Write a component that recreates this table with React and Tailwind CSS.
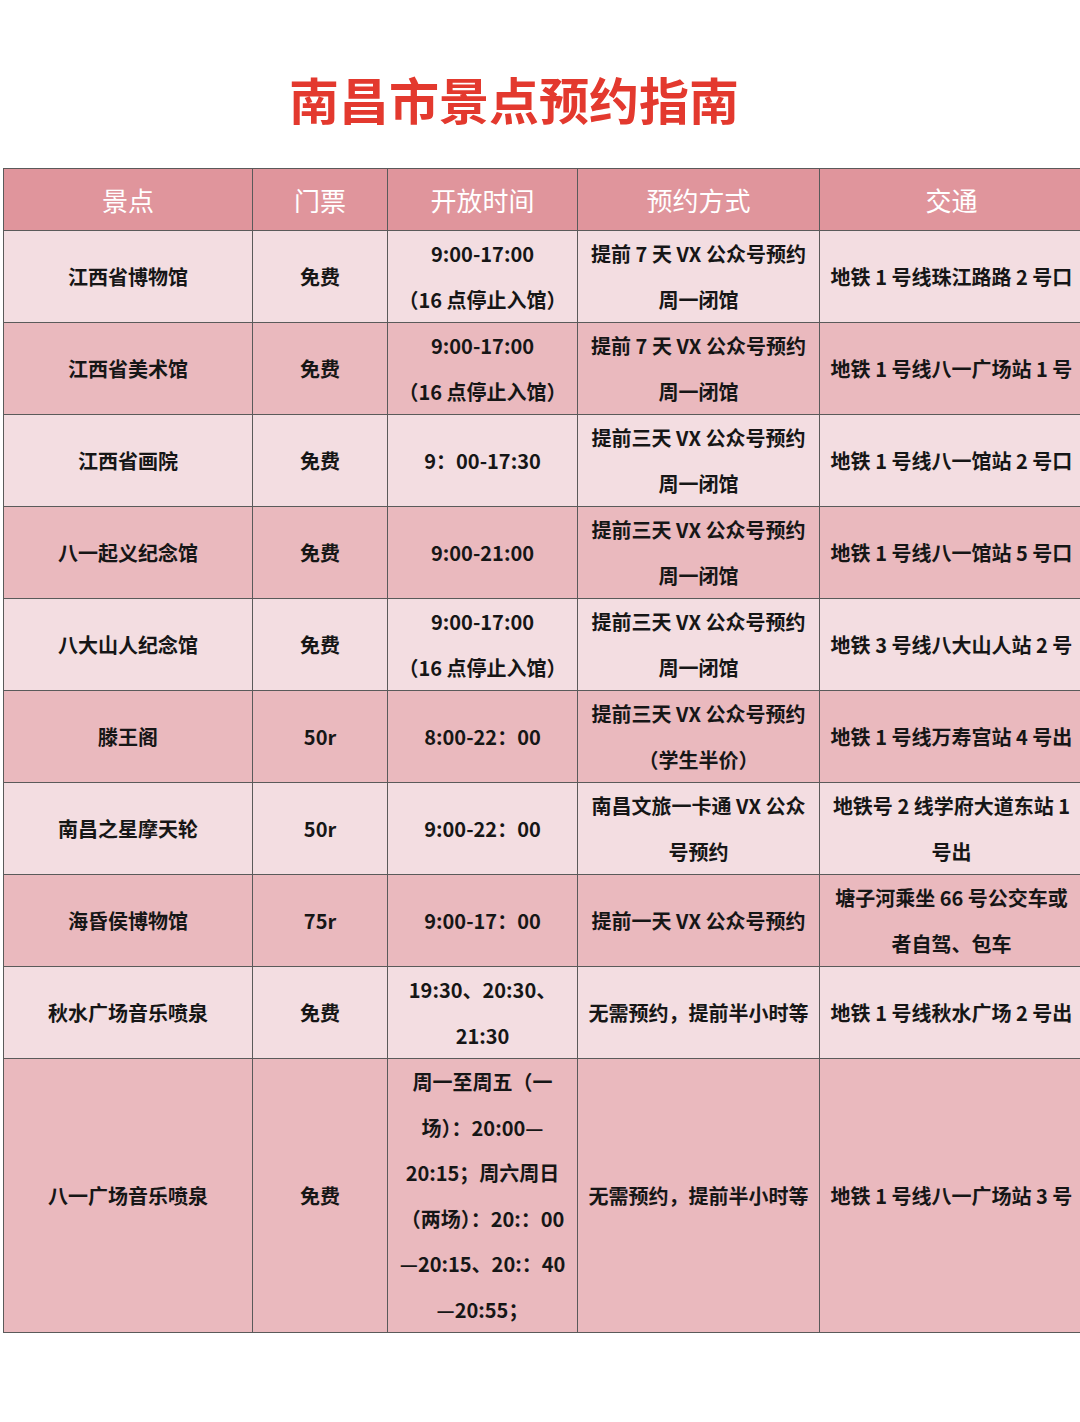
const rows = [
  {
    name: "江西省博物馆",
    ticket: "免费",
    time: ["9:00-17:00", "（16 点停止入馆）"],
    book: ["提前 7 天 VX 公众号预约", "周一闭馆"],
    transit: ["地铁 1 号线珠江路路 2 号口"],
  },
  {
    name: "江西省美术馆",
    ticket: "免费",
    time: ["9:00-17:00", "（16 点停止入馆）"],
    book: ["提前 7 天 VX 公众号预约", "周一闭馆"],
    transit: ["地铁 1 号线八一广场站 1 号"],
  },
  {
    name: "江西省画院",
    ticket: "免费",
    time: ["9：00-17:30"],
    book: ["提前三天 VX 公众号预约", "周一闭馆"],
    transit: ["地铁 1 号线八一馆站 2 号口"],
  },
  {
    name: "八一起义纪念馆",
    ticket: "免费",
    time: ["9:00-21:00"],
    book: ["提前三天 VX 公众号预约", "周一闭馆"],
    transit: ["地铁 1 号线八一馆站 5 号口"],
  },
  {
    name: "八大山人纪念馆",
    ticket: "免费",
    time: ["9:00-17:00", "（16 点停止入馆）"],
    book: ["提前三天 VX 公众号预约", "周一闭馆"],
    transit: ["地铁 3 号线八大山人站 2 号"],
  },
  {
    name: "滕王阁",
    ticket: "50r",
    time: ["8:00-22：00"],
    book: ["提前三天 VX 公众号预约", "（学生半价）"],
    transit: ["地铁 1 号线万寿宫站 4 号出"],
  },
  {
    name: "南昌之星摩天轮",
    ticket: "50r",
    time: ["9:00-22：00"],
    book: ["南昌文旅一卡通 VX 公众", "号预约"],
    transit: ["地铁号 2 线学府大道东站 1", "号出"],
  },
  {
    name: "海昏侯博物馆",
    ticket: "75r",
    time: ["9:00-17：00"],
    book: ["提前一天 VX 公众号预约"],
    transit: ["塘子河乘坐 66 号公交车或", "者自驾、包车"],
  },
  {
    name: "秋水广场音乐喷泉",
    ticket: "免费",
    time: ["19:30、20:30、", "21:30"],
    book: ["无需预约，提前半小时等"],
    transit: ["地铁 1 号线秋水广场 2 号出"],
  },
  {
    name: "八一广场音乐喷泉",
    ticket: "免费",
    time: [
      "周一至周五（一",
      "场）：20:00—",
      "20:15；周六周日",
      "（两场）：20:：00",
      "—20:15、20:：40",
      "—20:55；",
    ],
    book: ["无需预约，提前半小时等"],
    transit: ["地铁 1 号线八一广场站 3 号"],
    tall: true,
  },
];

const Cell = ({ lines, shade, tall }) => (
  <div
    className={`flex flex-col items-center justify-center border-r-[1.5px] border-b-[1.5px] border-[#5a5a5a] ${
      tall ? "h-[274px]" : "h-[92px]"
    } ${shade}`}
  >
    {lines.map((l, i) => (
      <span key={i} className="whitespace-nowrap leading-[45.5px]">
        {l}
      </span>
    ))}
  </div>
);

const App = () => {
  const heads = ["景点", "门票", "开放时间", "预约方式", "交通"];
  return (
    <main
      className="w-[1080px] min-h-[1422px] overflow-hidden bg-white"
      style={{ fontFamily: '"Noto Sans CJK SC", "Noto Sans", sans-serif' }}
    >
      <section className="h-[168px] flex justify-center pr-[52px] pt-[72px]">
        <h1 className="text-[50px] leading-[52px] font-bold text-[#e3392e]">
          南昌市景点预约指南
        </h1>
      </section>
      <section className="pl-[3px]">
        <div className="grid grid-cols-[249px_135px_190px_242px_264px] w-[1080px] border-l-[1.5px] border-t-[1.5px] border-[#5a5a5a] text-[20px] font-bold text-[#161616]">
          {heads.map((h) => (
            <div
              key={h}
              className="h-[62px] flex items-center justify-center bg-[#e0959c] text-white text-[26px] font-normal border-r-[1.5px] border-b-[1.5px] border-[#5a5a5a]"
            >
              {h}
            </div>
          ))}
          {rows.map((r, i) => {
            const shade = i % 2 === 0 ? "bg-[#f3dde1]" : "bg-[#eab9be]";
            return [
              <Cell key={i + "a"} lines={[r.name]} shade={shade} tall={r.tall} />,
              <Cell key={i + "b"} lines={[r.ticket]} shade={shade} tall={r.tall} />,
              <Cell key={i + "c"} lines={r.time} shade={shade} tall={r.tall} />,
              <Cell key={i + "d"} lines={r.book} shade={shade} tall={r.tall} />,
              <Cell key={i + "e"} lines={r.transit} shade={shade} tall={r.tall} />,
            ];
          })}
        </div>
      </section>
    </main>
  );
};

export default App;
